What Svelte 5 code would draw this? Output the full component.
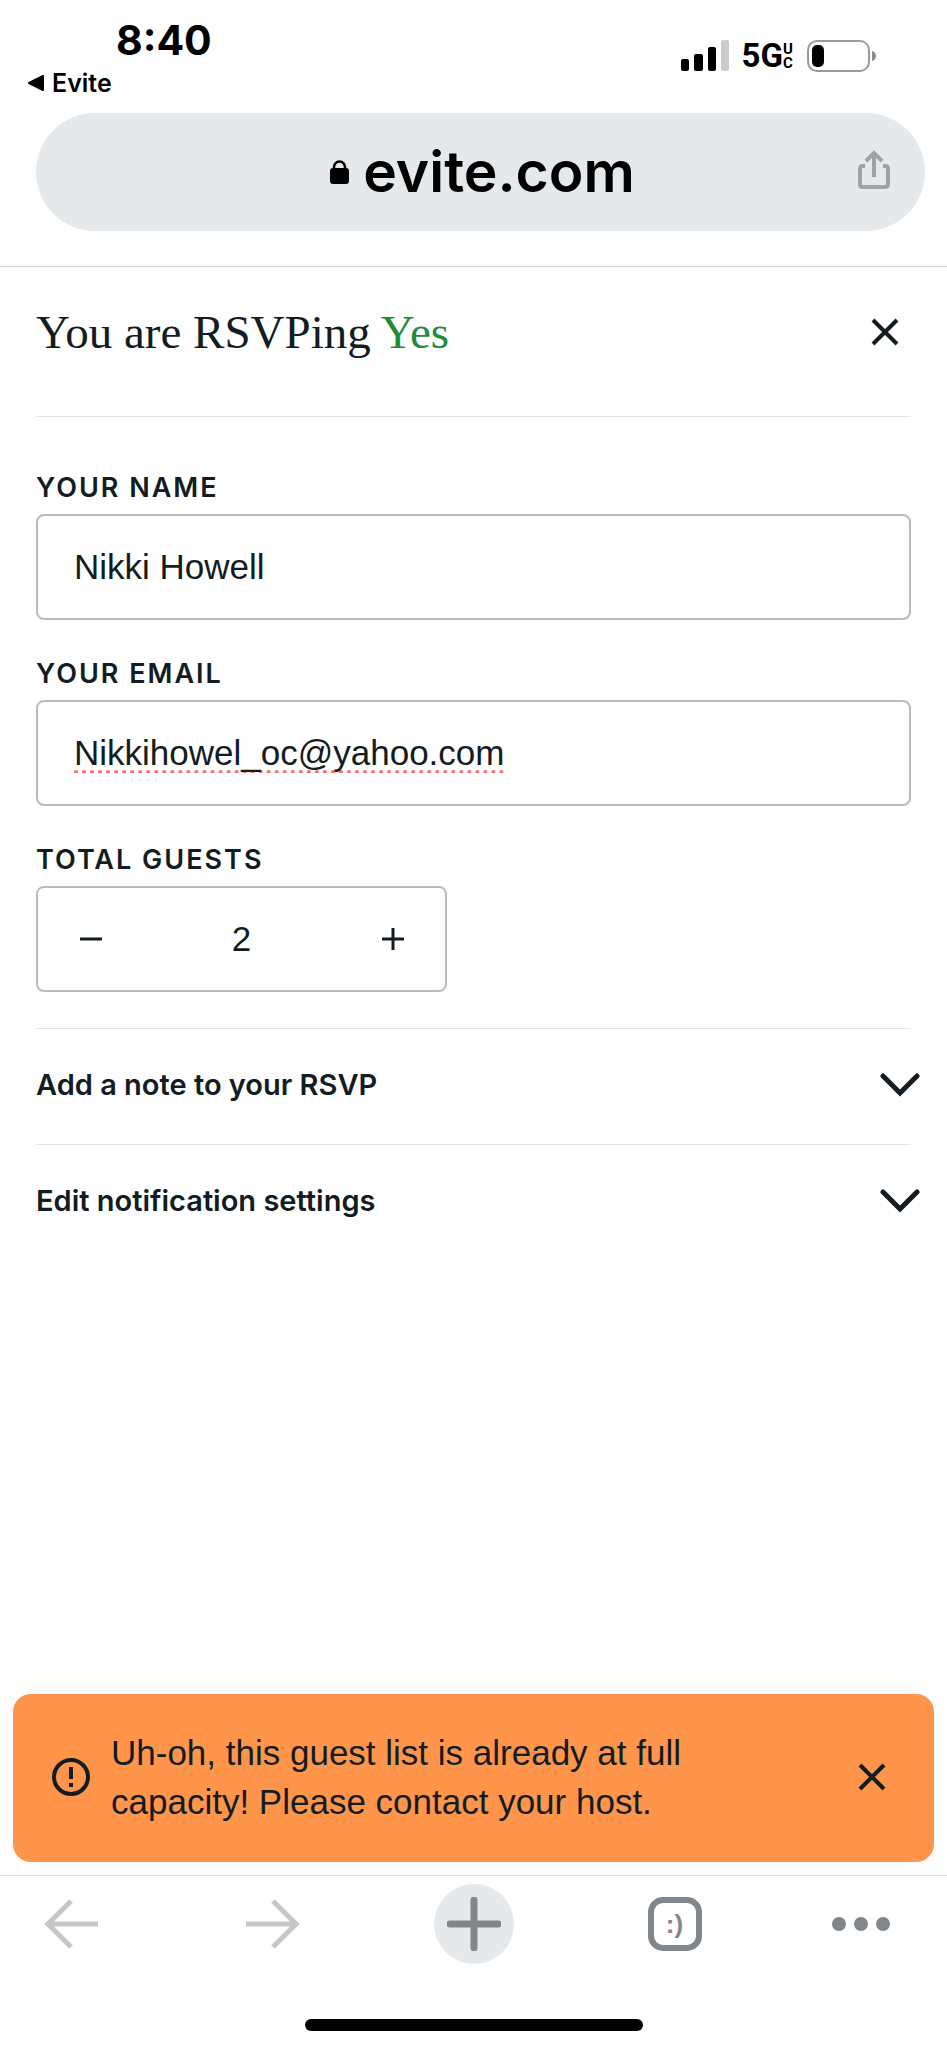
<script lang="ts">
	let name = $state("Nikki Howell");
	let email = $state("Nikkihowel_oc@yahoo.com");
	let guests = $state(2);
	let showAlert = $state(true);

	const sections = [
		{ id: "note", title: "Add a note to your RSVP" },
		{ id: "notifications", title: "Edit notification settings" },
	];
</script>

{#snippet cross()}
	<svg width="28" height="28" viewBox="0 0 28 28" aria-hidden="true">
		<path d="M2 2 26 26M26 2 2 26" fill="none" stroke="currentColor" stroke-width="4" />
	</svg>
{/snippet}

<div class="screen">
	<header class="status-bar">
		<div class="status-left">
			<span class="time">8:40</span>
			<a class="back-app" href="#evite">
				<svg width="16" height="16" viewBox="0 0 16 16" aria-hidden="true">
					<path d="M15 1v14L1 8z" fill="currentColor" stroke="currentColor" stroke-width="2" stroke-linejoin="round" />
				</svg>
				Evite
			</a>
		</div>
		<div class="status-right">
			<svg width="49" height="32" viewBox="0 0 49 32" aria-label="Signal">
				<rect x="0" y="19" width="8" height="12" rx="2" />
				<rect x="13" y="14" width="9" height="17" rx="2" />
				<rect x="27" y="7" width="8" height="24" rx="2" />
				<rect x="40" y="0" width="8" height="31" rx="2" fill="#cbcbcb" />
			</svg>
			<span class="network">5G<span class="network-sub">UC</span></span>
			<svg width="70" height="32" viewBox="0 0 70 32" aria-label="Battery">
				<rect x="1" y="1" width="61" height="30" rx="9" fill="none" stroke="#9b9b9b" stroke-width="2" />
				<rect x="5" y="5" width="12" height="22" rx="5" />
				<path d="M65 11q4 1 4 5t-4 5z" fill="#8c8c8c" />
			</svg>
		</div>
	</header>

	<div class="address-bar">
		<div class="address">
			<svg width="19" height="24" viewBox="0 0 19 24" aria-hidden="true">
				<rect x="0" y="8" width="19" height="16" rx="3" />
				<path d="M4 10V7a5.500 5.500 0 0 1 11 0v3" fill="none" stroke="#000" stroke-width="2.500" />
			</svg>
			<span class="host">evite.com</span>
		</div>
		<button class="share" type="button" aria-label="Share">
			<svg width="32" height="40" viewBox="0 0 32 40" aria-hidden="true">
				<path
					d="M7 16H5q-3 0-3 3v15q0 3 3 3h22q3 0 3-3V19q0-3-3-3h-2M16 27V4M8 11l8-8 8 8"
					fill="none"
					stroke="currentColor"
					stroke-width="4"
				/>
			</svg>
		</button>
	</div>

	<main class="sheet">
		<div class="sheet-head">
			<h1>You are RSVPing <span class="answer">Yes</span></h1>
			<button class="icon-button" type="button" aria-label="Close">{@render cross()}</button>
		</div>

		<form class="fields">
			<div class="field">
				<label for="name">YOUR NAME</label>
				<input id="name" class="box" type="text" bind:value={name} />
			</div>
			<div class="field">
				<label for="email">YOUR EMAIL</label>
				<input id="email" class="box misspelled" type="text" inputmode="email" spellcheck="false" bind:value={email} />
			</div>
			<div class="field">
				<label for="guests">TOTAL GUESTS</label>
				<div class="box stepper">
					<button type="button" aria-label="Remove guest" onclick={() => (guests = Math.max(1, guests - 1))}>
						<svg width="22" height="22" viewBox="0 0 22 22" aria-hidden="true">
							<path d="M0 11h22" stroke="currentColor" stroke-width="3" />
						</svg>
					</button>
					<input id="guests" type="text" inputmode="numeric" bind:value={guests} />
					<button type="button" aria-label="Add guest" onclick={() => (guests += 1)}>
						<svg width="22" height="22" viewBox="0 0 22 22" aria-hidden="true">
							<path d="M0 11h22M11 0v22" stroke="currentColor" stroke-width="3" />
						</svg>
					</button>
				</div>
			</div>
		</form>

		<div class="sections">
			{#each sections as section (section.id)}
				<div class="section">
					<button class="section-toggle" type="button" aria-expanded="false">
						{section.title}
						<svg width="40" height="24" viewBox="0 0 40 24" aria-hidden="true">
							<path d="M3 3 20 20 37 3" fill="none" stroke="currentColor" stroke-width="5" stroke-linecap="round" />
						</svg>
					</button>
				</div>
			{/each}
		</div>
	</main>

	{#if showAlert}
		<div class="toast" role="alert">
			<svg width="38" height="38" viewBox="0 0 38 38" aria-hidden="true">
				<circle cx="19" cy="19" r="17" fill="none" stroke="currentColor" stroke-width="4" />
				<path d="M19 9v12M19 25v4" stroke="currentColor" stroke-width="4" />
			</svg>
			<p>Uh-oh, this guest list is already at full capacity! Please contact your host.</p>
			<button class="icon-button" type="button" aria-label="Dismiss" onclick={() => (showAlert = false)}>
				{@render cross()}
			</button>
		</div>
	{/if}

	<nav class="toolbar" aria-label="Browser">
		<div class="toolbar-history">
			<button type="button" aria-label="Back">
				<svg width="54" height="50" viewBox="0 0 54 50" aria-hidden="true">
					<path d="M54 25H4M27 2 4 25l23 23" fill="none" stroke="#c6c6c6" stroke-width="5" />
				</svg>
			</button>
			<button type="button" aria-label="Forward">
				<svg width="54" height="50" viewBox="0 0 54 50" aria-hidden="true">
					<path d="M0 25h50M27 2l23 23-23 23" fill="none" stroke="#c6c6c6" stroke-width="5" />
				</svg>
			</button>
		</div>
		<button class="new-tab" type="button" aria-label="New tab">
			<svg width="54" height="54" viewBox="0 0 54 54" aria-hidden="true">
				<path d="M3 27h48M27 3v48" stroke="currentColor" stroke-width="7" stroke-linecap="round" />
			</svg>
		</button>
		<div class="toolbar-tabs">
			<button type="button" aria-label="Tabs"><span class="tab-count">:)</span></button>
			<button class="more" type="button" aria-label="More">
				<svg width="58" height="14" viewBox="0 0 58 14" aria-hidden="true">
					<circle cx="7" cy="7" r="7" fill="currentColor" />
					<circle cx="29" cy="7" r="7" fill="currentColor" />
					<circle cx="51" cy="7" r="7" fill="currentColor" />
				</svg>
			</button>
		</div>
	</nav>
	<div class="home-indicator"></div>
</div>

<style>
	:global(body) {
		margin: 0;
		background: #fefefe;
	}

	.screen {
		--ink: #121c21;
		--grey: #80868a;
		--line: #e0e2e5;
		--pill: #e6e9ec;
		--edge: 36px;
		--sans: "Liberation Sans", Arial, sans-serif;
		--ui: Inter, sans-serif;

		display: flex;
		flex-direction: column;
		min-height: 100vh;
		color: var(--ink);
		font-family: var(--sans);
	}

	.screen * {
		box-sizing: border-box;
	}

	svg {
		display: block;
		flex: none;
	}

	button {
		display: flex;
		align-items: center;
		justify-content: center;
		margin: 0;
		padding: 0;
		border: 0;
		background: none;
		color: inherit;
		font: inherit;
		cursor: pointer;
	}

	/* Status bar */

	.status-bar {
		display: flex;
		align-items: flex-start;
		justify-content: space-between;
		padding: 16px 70px 11px 28px;
		color: #000;
		font-family: var(--ui);
	}

	.status-left {
		display: flex;
		flex-direction: column;
	}

	.time {
		padding-left: 88px;
		font-size: 41px;
		font-weight: 700;
		line-height: 48px;
	}

	.back-app {
		display: flex;
		align-items: center;
		gap: 8px;
		color: inherit;
		font-size: 25px;
		font-weight: 600;
		line-height: 38px;
		text-decoration: none;
	}

	.status-right {
		display: flex;
		align-items: center;
		gap: 12px;
		padding-top: 24px;
	}

	.network {
		display: flex;
		align-items: center;
		font-family: Roboto, sans-serif;
		font-size: 33px;
		font-weight: 700;
		line-height: 32px;
	}

	/* Carrier suffix, one letter above the other */
	.network-sub {
		width: 12px;
		font-size: 15px;
		line-height: 14px;
		word-break: break-all;
	}

	/* Address bar */

	.address-bar {
		display: grid;
		padding: 0 22px 35px var(--edge);
		border-bottom: 1px solid #d3d4d6;
	}

	.address,
	.share {
		grid-area: 1 / 1;
	}

	.address {
		display: flex;
		align-items: center;
		justify-content: center;
		gap: 14px;
		height: 118px;
		padding: 0 24px 0 28px;
		border-radius: 59px;
		background: var(--pill);
		color: #000;
		font-family: var(--ui);
	}

	.host {
		font-size: 57px;
		font-weight: 600;
		line-height: 72px;
	}

	.share {
		justify-self: end;
		padding: 0 35px 4px;
		color: #9da1a9;
	}

	/* RSVP sheet */

	.sheet {
		flex: 1;
		padding: 0 var(--edge);
	}

	.sheet-head {
		display: flex;
		align-items: center;
		justify-content: space-between;
		padding: 33px 12px 52px 0;
		border-bottom: 1px solid var(--line);
	}

	h1 {
		margin: 0;
		font-family: "Liberation Serif", serif;
		font-size: 47px;
		font-weight: 400;
		line-height: 64px;
	}

	.answer {
		color: #1f8b3b;
	}

	.fields {
		display: flex;
		flex-direction: column;
		gap: 38px;
		padding: 55px 0 36px;
	}

	.field {
		display: flex;
		flex-direction: column;
		gap: 10px;
	}

	label {
		font-family: var(--ui);
		font-size: 27px;
		font-weight: 600;
		letter-spacing: 2px;
		line-height: 32px;
	}

	input {
		min-width: 0;
		margin: 0;
		border: 0;
		outline: 0;
		background: none;
		color: inherit;
		font-family: inherit;
		font-size: 35px;
	}

	.box {
		width: 100%;
		height: 106px;
		padding: 0 36px;
		border: 2px solid #b9bcbe;
		border-radius: 8px;
	}

	.misspelled {
		text-decoration: underline dotted #ff6b66 4px;
		text-decoration-skip-ink: none;
		text-underline-offset: 5px;
	}

	.stepper {
		display: flex;
		max-width: 411px;
		padding: 0;
	}

	.stepper button {
		width: 105px;
	}

	.stepper input {
		flex: 1;
		text-align: center;
	}

	.section {
		border-top: 1px solid var(--line);
	}

	/* Chevrons hang past the divider */
	.section-toggle {
		justify-content: space-between;
		width: calc(100% + 9px);
		height: 115px;
		padding-bottom: 4px;
		font-family: var(--ui);
		font-size: 29px;
		font-weight: 600;
	}

	/* Toast */

	.toast {
		display: flex;
		align-items: center;
		gap: 21px;
		margin: 0 13px 13px;
		padding: 34px 48px 36px 39px;
		border-radius: 18px;
		background: #ff954b;
	}

	.toast p {
		flex: 1;
		max-width: 640px;
		margin: 0;
		font-size: 35px;
		line-height: 49px;
	}

	.toast .icon-button {
		margin-left: auto;
	}

	/* Browser toolbar */

	.toolbar {
		display: grid;
		grid-template-columns: 1fr 80px 1fr;
		padding-top: 8px;
		border-top: 1px solid #dfe0e1;
		color: var(--grey);
	}

	.toolbar button {
		width: 80px;
		height: 80px;
	}

	.toolbar-history,
	.toolbar-tabs {
		display: flex;
		justify-content: space-between;
	}

	.toolbar-history {
		padding: 0 121px 0 31px;
	}

	.toolbar-tabs {
		padding: 0 57px 0 121px;
	}

	.toolbar .new-tab {
		border-radius: 50%;
		background: var(--pill);
	}

	.toolbar .more {
		width: 58px;
	}

	.tab-count {
		width: 54px;
		height: 54px;
		border: 6px solid currentColor;
		border-radius: 15px;
		font-size: 26px;
		font-weight: 700;
		line-height: 42px;
	}

	.home-indicator {
		width: 338px;
		height: 12px;
		margin: 55px auto 17px;
		border-radius: 6px;
		background: #000;
	}
</style>
